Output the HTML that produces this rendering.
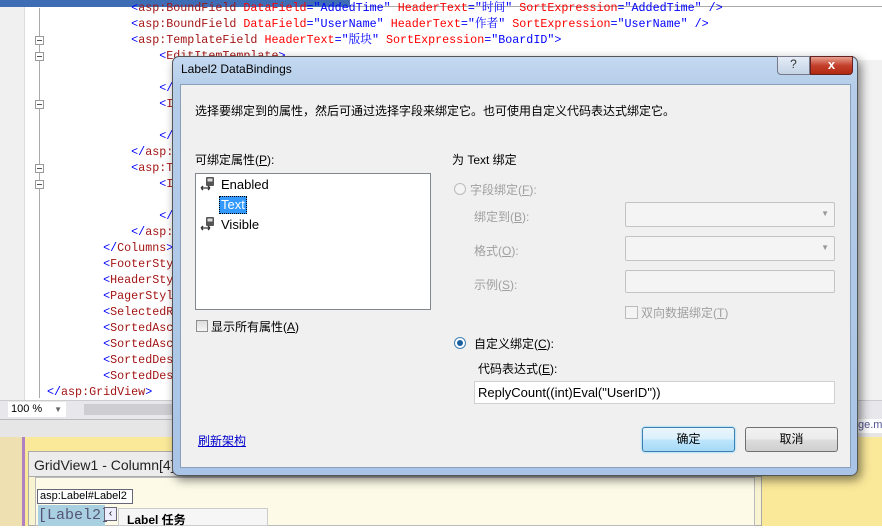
<!DOCTYPE html>
<html><head><meta charset="utf-8"><style>
*{margin:0;padding:0;box-sizing:border-box}
body{width:882px;height:526px;overflow:hidden;position:relative;background:#fff;font-family:"Liberation Sans","Noto Sans CJK SC",sans-serif;font-size:12px;color:#000}
.abs{position:absolute}
.code{position:absolute;font-family:"Liberation Mono","Noto Serif CJK SC",monospace;font-size:11.7px;line-height:16px;white-space:pre;color:#a31515}
.b{color:#00f}.r{color:#f00}
.fold{position:absolute;left:35px;width:9px;height:9px;border:1px solid #999;background:#fff}
.fold:after{content:"";position:absolute;left:1px;top:3px;width:5px;height:1px;background:#555}
.lbl{position:absolute;font-size:12px}
.dis{color:#a0a0a0}
.box{position:absolute;border:1px solid #c4c4c4;border-radius:2px;background:#f4f4f4}
.btn{position:absolute;width:93px;height:25px;border:1px solid #707070;border-radius:3px;background:linear-gradient(#f2f2f2,#ebebeb 50%,#dddddd 51%,#cfcfcf);text-align:center;line-height:23px;font-size:12px}
.ico{position:absolute;width:16px;height:14px}
</style></head><body>
<div class="abs" style="left:0;top:0;width:25px;height:400px;background:#f0f0f0;border-right:1px solid #ddd"></div>
<div class="abs" style="left:0;top:0;width:350px;height:7px;background:#3e6db5"></div>
<div class="abs" style="left:350px;top:0;width:532px;height:7px;background:#fff;border-bottom:1px solid #aaa"></div>
<div class="abs" style="left:39px;top:8px;width:1px;height:390px;background:#aaa"></div>
<div class="fold" style="top:36px"></div><div class="fold" style="top:52px"></div><div class="fold" style="top:100px"></div><div class="fold" style="top:164px"></div><div class="fold" style="top:180px"></div>
<div class="code" style="left:47px;top:0px"><span class="b">            &lt;</span>asp:BoundField <span class="r">DataField</span><span class="b">="AddedTime"</span> <span class="r">HeaderText</span><span class="b">="时间"</span> <span class="r">SortExpression</span><span class="b">="AddedTime" /&gt;</span>
<span class="b">            &lt;</span>asp:BoundField <span class="r">DataField</span><span class="b">="UserName"</span> <span class="r">HeaderText</span><span class="b">="作者"</span> <span class="r">SortExpression</span><span class="b">="UserName" /&gt;</span>
<span class="b">            &lt;</span>asp:TemplateField <span class="r">HeaderText</span><span class="b">="版块"</span> <span class="r">SortExpression</span><span class="b">="BoardID"&gt;</span>
<span class="b">                &lt;</span>EditItemTemplate<span class="b">&gt;</span>

<span class="b">                &lt;/</span>
<span class="b">                &lt;</span>I                                                                                   <span class="r">rdII</span>

<span class="b">                &lt;/</span>
<span class="b">            &lt;/</span>asp:
<span class="b">            &lt;</span>asp:T
<span class="b">                &lt;</span>I

<span class="b">                &lt;/</span>
<span class="b">            &lt;/</span>asp:
<span class="b">        &lt;/</span>Columns<span class="b">&gt;</span>
<span class="b">        &lt;</span>FooterSty
<span class="b">        &lt;</span>HeaderSty
<span class="b">        &lt;</span>PagerStyl
<span class="b">        &lt;</span>SelectedR
<span class="b">        &lt;</span>SortedAsc
<span class="b">        &lt;</span>SortedAsc
<span class="b">        &lt;</span>SortedDes
<span class="b">        &lt;</span>SortedDes
<span class="b">&lt;/</span>asp:GridView<span class="b">&gt;</span></div>
<div class="abs" style="left:0;top:400px;width:882px;height:19px;background:#e8e8ec;border-top:1px solid #ccc"></div>
<div class="abs" style="left:8px;top:402px;width:58px;height:15px;background:#fff;font-size:11px;padding-left:3px;line-height:15px">100 %<span style="float:right;margin-right:4px;color:#666;font-size:8px">▼</span></div>
<div class="abs" style="left:84px;top:404px;width:90px;height:11px;background:#cdcdd2"></div>
<div class="abs" style="left:0;top:419px;width:882px;height:18px;background:#e6e6e6;border-top:1px solid #bbb"></div>
<div class="abs" style="left:0;top:437px;width:882px;height:89px;background:#fbe99a"></div>
<div class="abs" style="left:0;top:437px;width:22px;height:89px;background:#eee0b0"></div>
<div class="abs" style="left:22px;top:437px;width:3px;height:89px;background:#b080c0"></div>
<div class="abs" style="left:28px;top:451px;width:734px;height:75px;background:#f8f3d0;border:1px solid #aaa"></div>
<div class="abs" style="left:28px;top:451px;width:734px;height:26px;background:#ececec;border:1px solid #aaa;font-size:14px;padding:5px 5px;color:#222">GridView1 - Column[4] -</div>
<div class="abs" style="left:35px;top:477px;width:720px;height:49px;border:1px solid #bbb;background:#fdfbe8"></div>
<div class="abs" style="left:37px;top:489px;width:96px;height:15px;border:1px solid #667;background:#fff;font-size:11px;line-height:13px;padding-left:2px">asp:Label#Label2</div>
<div class="abs" style="left:38px;top:505px;width:67px;height:21px;background:#a8d0e0;font-family:'Liberation Mono',monospace;font-size:15px;color:#557;line-height:21px">[Label2]</div>
<div class="abs" style="left:104px;top:507px;width:13px;height:14px;border:1px solid #667;background:#eef;font-size:10px;text-align:center">‹</div>
<div class="abs" style="left:118px;top:508px;width:150px;height:18px;background:#f6f6f6;border:1px solid #ccc;font-weight:bold;font-size:12px;padding:2px 8px">Label 任务</div>
<div class="abs" style="left:858px;top:419px;width:24px;height:14px;background:#fff;font-size:11px;color:#559">ge.m</div>
<div class="abs" style="left:858px;top:60px;width:24px;height:340px;background:#f2f2f2"></div>
<div class="abs" style="left:172px;top:56px;width:686px;height:420px;border:1px solid #555;border-radius:7px;background:linear-gradient(180deg,#c4d9f1,#b5cde9 30px,#a9c4e6);box-shadow:3px 4px 10px rgba(0,0,0,.5)"></div>
<div class="abs" style="left:181px;top:62px;font-size:12px;color:#000">Label2 DataBindings</div>
<div class="abs" style="left:777px;top:56px;width:33px;height:19px;border:1px solid #778;border-radius:0 0 0 4px;background:linear-gradient(#e4ecf6,#c4d4e6);text-align:center;font-size:12px;color:#333">?</div>
<div class="abs" style="left:810px;top:56px;width:43px;height:19px;border:1px solid #622;border-radius:0 0 4px 0;background:linear-gradient(#e8a090,#c4402c 50%,#b02810);text-align:center;color:#fff;font-weight:bold;font-size:13px">x</div>
<div class="abs" style="left:180px;top:84px;width:671px;height:384px;background:#f0f0f0;border:1px solid #8aa0ba"></div>
<div class="lbl" style="left:195px;top:102px">选择要绑定到的属性，然后可通过选择字段来绑定它。也可使用自定义代码表达式绑定它。</div>
<div class="lbl" style="left:195px;top:151px">可绑定属性(<u>P</u>):</div>
<div class="abs" style="left:195px;top:173px;width:236px;height:137px;background:#fff;border:1px solid #828790"></div>
<svg class="ico" style="left:200px;top:177px" viewBox="0 0 16 14"><rect x="6" y="0" width="8" height="9" rx="1" fill="#555"/><rect x="7.5" y="1.5" width="5" height="3" fill="#ddd"/><path d="M1 11h9M1 11l2-2M1 11l2 2M10 11l-2-2M10 11l-2 2" stroke="#333" stroke-width="1.3" fill="none"/></svg>
<div class="lbl" style="left:221px;top:177px;font-size:13px">Enabled</div>
<div class="abs" style="left:219px;top:196px;width:28px;height:18px;background:#3399ff;border:1px dotted #000;color:#fff;font-size:13px;padding-left:1px;line-height:16px">Text</div>
<svg class="ico" style="left:200px;top:217px" viewBox="0 0 16 14"><rect x="6" y="0" width="8" height="9" rx="1" fill="#555"/><rect x="7.5" y="1.5" width="5" height="3" fill="#ddd"/><path d="M1 11h9M1 11l2-2M1 11l2 2M10 11l-2-2M10 11l-2 2" stroke="#333" stroke-width="1.3" fill="none"/></svg>
<div class="lbl" style="left:221px;top:217px;font-size:13px">Visible</div>
<div class="abs" style="left:196px;top:320px;width:12px;height:12px;border:1px solid #8e8f8f;background:linear-gradient(#ddd,#f6f6f6)"></div>
<div class="lbl" style="left:211px;top:318px">显示所有属性(<u>A</u>)</div>
<div class="lbl" style="left:452px;top:151px">为 Text 绑定</div>
<div class="abs" style="left:454px;top:183px;width:12px;height:12px;border:1px solid #bbb;border-radius:50%;background:#f4f4f4"></div>
<div class="lbl dis" style="left:470px;top:181px">字段绑定(<u>F</u>):</div>
<div class="lbl dis" style="left:474px;top:208px">绑定到(<u>B</u>):</div>
<div class="box" style="left:625px;top:202px;width:210px;height:25px"><span style="position:absolute;right:5px;top:6px;font-size:8px;color:#999">▼</span></div>
<div class="lbl dis" style="left:474px;top:242px">格式(<u>O</u>):</div>
<div class="box" style="left:625px;top:236px;width:210px;height:25px"><span style="position:absolute;right:5px;top:6px;font-size:8px;color:#999">▼</span></div>
<div class="lbl dis" style="left:474px;top:276px">示例(<u>S</u>):</div>
<div class="box" style="left:625px;top:270px;width:210px;height:23px"></div>
<div class="abs" style="left:625px;top:306px;width:13px;height:13px;border:1px solid #bbb;background:#f4f4f4"></div>
<div class="lbl dis" style="left:641px;top:304px">双向数据绑定(<u>T</u>)</div>
<div class="abs" style="left:454px;top:337px;width:12px;height:12px;border:1px solid #3c7fb1;border-radius:50%;background:#fff"><div style="position:absolute;left:2px;top:2px;width:6px;height:6px;border-radius:50%;background:#1a5f9e"></div></div>
<div class="lbl" style="left:474px;top:335px">自定义绑定(<u>C</u>):</div>
<div class="lbl" style="left:478px;top:360px">代码表达式(<u>E</u>):</div>
<div class="abs" style="left:474px;top:381px;width:361px;height:23px;background:#fff;border:1px solid #d0d0d0;font-size:13px;padding:3px 3px">ReplyCount((int)Eval("UserID"))</div>
<div class="lbl" style="left:198px;top:432px;color:#00c;text-decoration:underline">刷新架构</div>
<div class="btn" style="left:642px;top:427px;border-color:#3c7fb1;background:linear-gradient(#eaf6fd,#d9f0fc 50%,#bee6fd 51%,#a7d9f5);box-shadow:0 0 2px #6cf">确定</div>
<div class="btn" style="left:745px;top:427px">取消</div>
</body></html>
